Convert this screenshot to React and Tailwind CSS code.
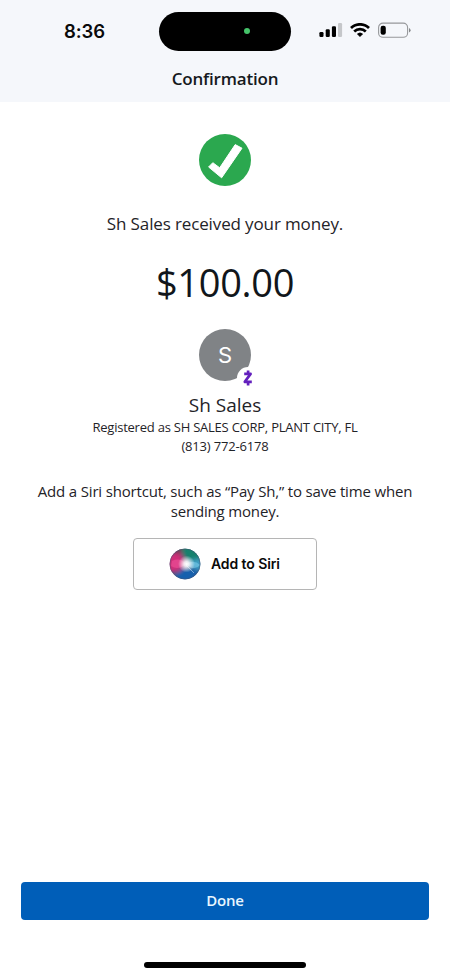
function SignalIcon() {
  return (
    <svg width="24" height="16" viewBox="0 0 24 16" className="block">
      <rect x="0.4" y="9" width="4.1" height="5" rx="1.2" fill="#000" />
      <rect x="6.7" y="6.2" width="4.1" height="7.8" rx="1.2" fill="#000" />
      <rect x="12.9" y="3.2" width="4.1" height="10.8" rx="1.2" fill="#000" />
      <rect x="19" y="0" width="4.1" height="14" rx="1.2" fill="#c5c7ca" />
    </svg>
  );
}

function WifiIcon() {
  return (
    <svg width="20" height="16" viewBox="0 0 20 16" className="block">
      <g fill="none" stroke="#000" strokeWidth="2.7">
        <path d="M1 5 A12.8 12.8 0 0 1 19 5" />
        <path d="M4.2 8.5 A8.3 8.3 0 0 1 15.8 8.5" />
      </g>
      <path d="M10 13.8 L7.2 11 A4.3 4.3 0 0 1 12.8 11 Z" fill="#000" stroke="#000" strokeWidth="0.4" strokeLinejoin="round" />
    </svg>
  );
}

function BatteryIcon() {
  return (
    <svg width="33" height="16" viewBox="0 0 33 16" className="block overflow-visible">
      <rect x="0.6" y="0.1" width="29" height="14.2" rx="4.4" fill="none" stroke="#96989b" strokeWidth="1.1" />
      <rect x="2.6" y="2.7" width="5.2" height="9" rx="2.2" fill="#000" />
      <path d="M31 5 Q32.6 5.8 32.6 7.3 Q32.6 8.8 31 9.6 Z" fill="#85878a" />
    </svg>
  );
}

function CheckBadge() {
  return (
    <svg width="52" height="52" viewBox="0 0 52 52" className="block">
      <circle cx="26" cy="26" r="26" fill="#2ba84f" />
      <path
        d="M9.6 33 L13.8 28.7 L20.7 33.8 L36.2 10.6 L43 14.2 L22.6 43.8 Z"
        fill="#fff"
        stroke="#fff"
        strokeWidth="1"
        strokeLinejoin="round"
      />
    </svg>
  );
}

function ZelleMark() {
  return (
    <svg width="22" height="22" viewBox="0 0 22 22" className="block">
      <circle cx="11" cy="11" r="11" fill="#fff" />
      <path
        d="M7.2 6.9 H13.6 L7.8 14.8 H14.8 M11.1 3.6 V7 M11.1 15 V18.4"
        fill="none"
        stroke="#6320bd"
        strokeWidth="2.7"
        strokeLinejoin="round"
      />
    </svg>
  );
}

function SiriOrb() {
  return (
    <svg width="32" height="32" viewBox="0 0 32 32" className="block">
      <defs>
        <clipPath id="orb"><circle cx="16" cy="16" r="15.3" /></clipPath>
        <filter id="soft" x="-50%" y="-50%" width="200%" height="200%"><feGaussianBlur stdDeviation="2.2" /></filter>
        <filter id="fine" x="-50%" y="-50%" width="200%" height="200%"><feGaussianBlur stdDeviation="0.7" /></filter>
        <radialGradient id="glow">
          <stop offset="0" stopColor="#fff" />
          <stop offset="0.3" stopColor="#fff" stopOpacity="0.85" />
          <stop offset="1" stopColor="#fff" stopOpacity="0" />
        </radialGradient>
      </defs>
      <g clipPath="url(#orb)">
        <rect width="32" height="32" fill="#35547f" />
        <g filter="url(#soft)">
          <path d="M-2 5 L12 5 L17 16 L10 23 L-2 26 Z" fill="#d02f79" />
          <path d="M9 -3 H34 V12 L18 13 Z" fill="#15816d" />
          <path d="M18 13 L34 10 V24 L22 19 Z" fill="#3f9fc5" />
          <path d="M5 28 L15 20 L31 22 L24 35 H8 Z" fill="#1460ad" />
          <path d="M1 3 L13 -1 L13 7 Z" fill="#713952" />
        </g>
        <g filter="url(#fine)">
          <path d="M3 13 Q11 9 17 16 Q9 23 2 18 Z" fill="#f45aa0" opacity="0.5" />
          <path d="M17 16 Q25 11 31 17 Q25 24 17 16 Z" fill="#8bdaf4" opacity="0.45" />
          <path d="M17 17 L25 25" fill="none" stroke="#b6d4f2" strokeWidth="1" opacity="0.6" />
        </g>
        <circle cx="17.5" cy="16" r="8.5" fill="url(#glow)" />
      </g>
      <circle cx="16" cy="16" r="15" fill="none" stroke="#4b536f" strokeWidth="0.8" opacity="0.5" />
    </svg>
  );
}

export default function App() {
  return (
    <div className="flex h-[976px] w-[450px] flex-col bg-white font-['Open_Sans',sans-serif] text-[#1f2328]">
      <header className="h-[102px] bg-[#f5f7fb]">
        <div className="flex h-[62px] items-center">
          <div className="w-[159px] pl-16 font-['Inter',sans-serif] text-[18.5px] font-semibold leading-none tracking-[-0.1px] text-[#0a0a0a]">
            8:36
          </div>
          <div className="flex h-[39px] w-[132px] items-center rounded-full bg-black pl-[85px]">
            <div className="size-1.5 rounded-full bg-[#45c46a]" />
          </div>
          <div className="flex items-center pl-7">
            <SignalIcon />
            <div className="pl-[7px]"><WifiIcon /></div>
            <div className="pl-2"><BatteryIcon /></div>
          </div>
        </div>
        <h1 className="h-[34px] text-center text-[17px] font-semibold leading-[34px] tracking-[-0.2px] text-[#15191d]">
          Confirmation
        </h1>
      </header>

      <main className="flex flex-1 flex-col items-center whitespace-nowrap text-center">
        <div className="pt-8"><CheckBadge /></div>
        <p className="mt-[26px] text-[17px] leading-6 tracking-[-0.13px]">Sh Sales received your money.</p>
        <p className="mt-[22px] text-[38px] leading-[48px] tracking-[-0.3px] text-[#11161b]">$100.00</p>
        <div className="relative mt-[23px] flex size-[52px] items-center justify-center rounded-full bg-[#808386] pt-px font-['Inter',sans-serif] text-[22px] text-white">
          S
          <div className="absolute left-[38px] top-[38px]"><ZelleMark /></div>
        </div>
        <h2 className="mt-3 text-[19px] leading-6">Sh Sales</h2>
        <p className="mt-px text-[13px] leading-[19px] tracking-[-0.23px]">
          Registered as SH SALES CORP, PLANT CITY, FL
        </p>
        <p className="text-[13px] leading-[19px] tracking-[-0.17px]">(813) 772-6178</p>
        <p className="mt-[25px] text-[15px] leading-5 tracking-[-0.17px]">
          Add a Siri shortcut, such as “Pay Sh,” to save time when
          <br />
          sending money.
        </p>
        <button className="mt-[17px] flex h-[52px] w-[184px] items-center rounded border border-[#b5b5b5] pl-[35px] font-['Inter',sans-serif] text-[14px] font-semibold tracking-[-0.1px] text-[#0a0a0a]">
          <SiriOrb />
          <span className="pb-px pl-2.5">Add to Siri</span>
        </button>
      </main>

      <footer className="flex h-[94px] flex-col items-center">
        <button className="h-[38px] w-[408px] rounded bg-[#005eb8] pb-px text-[15px] font-semibold tracking-[-0.2px] text-[#e8f6ff]">
          Done
        </button>
        <div className="mt-[42px] h-[6px] w-[162px] rounded-full bg-black" />
      </footer>
    </div>
  );
}
